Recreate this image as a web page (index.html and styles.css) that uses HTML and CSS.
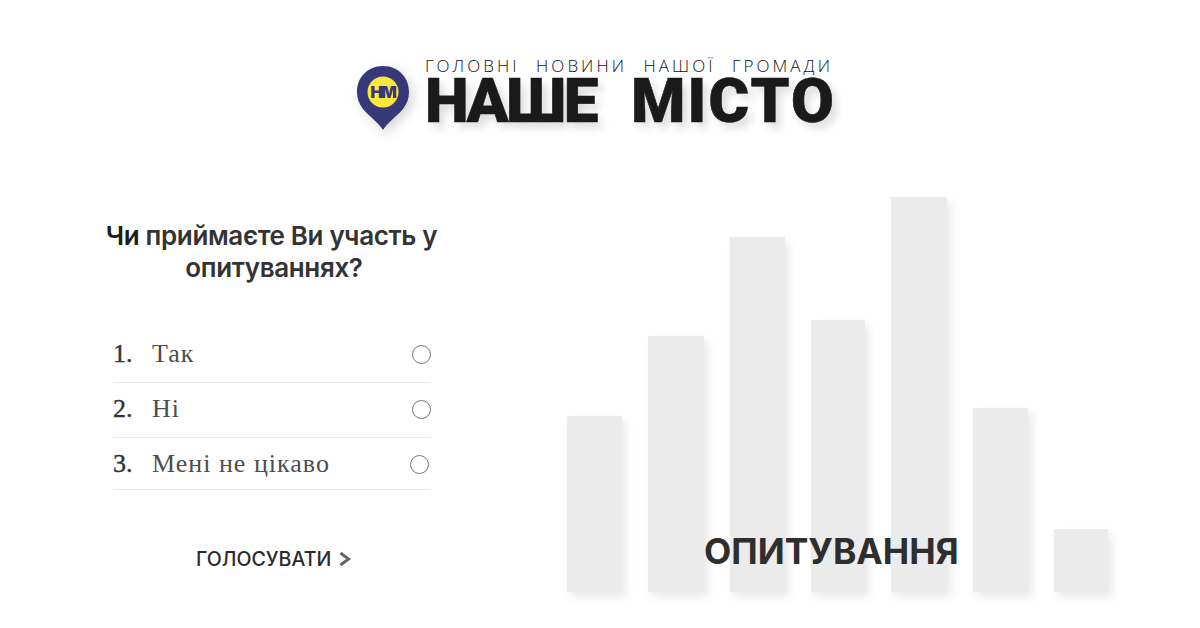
FILE: index.html
```html
<!DOCTYPE html>
<html lang="uk">
<head>
    <meta charset="UTF-8">
    <meta name="viewport" content="width=device-width, initial-scale=1.0">
    <title>Наше Місто - Опитування</title>
    <link rel="stylesheet" href="styles.css">
</head>
<body>
    <header class="logo">
        <svg class="logo-pin" viewBox="0 0 54 66" width="54" height="66">
            <path d="M27 65 C23 58 14 52 7 44 C3 39 1 33 1 27 C1 12 12 1 27 1 C42 1 53 12 53 27 C53 33 51 39 47 44 C40 52 31 58 27 65 Z" fill="#37387a"/>
            <circle cx="27" cy="27" r="15.5" fill="#f6e83c"/>
            <text x="27" y="33" text-anchor="middle" class="logo-pin-text">НМ</text>
        </svg>
        <div class="logo-text">
            <div class="logo-tagline">ГОЛОВНІ НОВИНИ НАШОЇ ГРОМАДИ</div>
            <div class="logo-title">
                <span class="logo-word-first">НАШЕ</span>
                <span class="logo-word-second">МІСТО</span>
            </div>
        </div>
    </header>

    <main class="content">
        <section class="poll">
            <h1 class="poll-question"><span class="poll-question-dark">Чи</span> приймаєте Ви участь у<br><span class="poll-question-line">опитуваннях?</span></h1>
            <ol class="poll-options">
                <li class="poll-option">
                    <span class="poll-num">1.</span>
                    <span class="poll-label">Так</span>
                    <span class="poll-radio"></span>
                </li>
                <li class="poll-option">
                    <span class="poll-num">2.</span>
                    <span class="poll-label">Ні</span>
                    <span class="poll-radio"></span>
                </li>
                <li class="poll-option poll-option-last">
                    <span class="poll-num">3.</span>
                    <span class="poll-label">Мені не цікаво</span>
                    <span class="poll-radio"></span>
                </li>
            </ol>
            <div class="poll-vote">
                <span>ГОЛОСУВАТИ</span>
                <svg viewBox="0 0 12 16" width="12" height="16">
                    <path d="M1.5 2 L9.5 8 L1.5 14" fill="none" stroke="#666" stroke-width="3"/>
                </svg>
            </div>
        </section>

        <section class="chart">
            <div class="bar" style="width: 55px; height: 176px"></div>
            <div class="bar" style="width: 56px; height: 256px"></div>
            <div class="bar" style="width: 55px; height: 355px"></div>
            <div class="bar" style="width: 54px; height: 272px"></div>
            <div class="bar" style="width: 56px; height: 395px"></div>
            <div class="bar" style="width: 55px; height: 184px"></div>
            <div class="bar" style="width: 54px; height: 63px"></div>
            <div class="chart-title">ОПИТУВАННЯ</div>
        </section>
    </main>
</body>
</html>
```

FILE: styles.css
```css
* {
    box-sizing: border-box;
}
html, body {
    margin: 0;
    height: 100%;
}
body {
    width: 1200px;
    height: 628px;
    overflow: hidden;
    background-color: #fff;
    font-family: Inter, "Liberation Sans", sans-serif;
    color: #2b2b2b;
}

/* Logo */
.logo {
    height: 130px;
    padding: 56px 0 0 356px;
    display: flex;
    align-items: flex-start;
}
.logo-pin {
    margin-top: 9px;
    filter: drop-shadow(4px 4px 6px rgba(0, 0, 0, 0.16));
}
.logo-pin-text {
    font-family: Inter, sans-serif;
    font-size: 16.5px;
    font-weight: 900;
    letter-spacing: -1.5px;
    fill: #37387a;
}
.logo-text {
    margin-left: 15px;
    width: 410px;
}
.logo-tagline {
    font-family: "Open Sans", sans-serif;
    font-size: 17px;
    font-weight: 300;
    line-height: 20px;
    letter-spacing: 3.05px;
    word-spacing: 9px;
    white-space: nowrap;
    color: #111;
}
.logo-title {
    display: flex;
    gap: 35px;
    font-family: Roboto, sans-serif;
    font-size: 62px;
    font-weight: 900;
    line-height: 50px;
    white-space: nowrap;
    color: #1a1a1a;
    -webkit-text-stroke: 0.6px #1a1a1a;
    text-shadow: 5px 6px 9px rgba(0, 0, 0, 0.14);
}
.logo-word-first {
    letter-spacing: -2.5px;
}
.logo-word-second {
    letter-spacing: 2.2px;
}

/* Poll */
.content {
    display: flex;
    align-items: flex-start;
}
.poll {
    width: 333px;
    margin: 90px 0 0 105px;
}
.poll-question {
    margin: 0 -4px;
    font-size: 26px;
    font-weight: 600;
    line-height: 32px;
    text-align: center;
    letter-spacing: -0.35px;
    color: #333;
}
.poll-question-dark {
    color: #1c1c1c;
}
.poll-question-line {
    padding-left: 5px;
}
.poll-options {
    list-style: none;
    margin: 44px 0 0 8px;
    padding: 0;
    width: 318px;
}
.poll-option {
    height: 55px;
    padding-bottom: 2px;
    display: flex;
    align-items: center;
    border-bottom: 1px solid #e8e8e8;
    font-family: "Liberation Serif", serif;
    font-size: 26px;
}
.poll-option-last {
    height: 52px;
    padding-top: 3px;
}
.poll-option-last .poll-radio {
    margin-right: 2px;
}
.poll-num {
    width: 39px;
    color: #333;
    -webkit-text-stroke: 0.4px #333;
}
.poll-label {
    flex: 1;
    color: #4d4d4d;
    letter-spacing: 1px;
}
.poll-radio {
    width: 19px;
    height: 19px;
    border: 1.5px solid #777;
    border-radius: 50%;
}
.poll-vote {
    margin: 57px 0 0 91px;
    display: flex;
    align-items: center;
    gap: 8px;
    font-size: 19.6px;
    font-weight: 500;
    color: #2b2b2b;
}

/* Chart */
.chart {
    position: relative;
    height: 395px;
    margin: 67px 0 0 129px;
    display: flex;
    align-items: flex-end;
    gap: 26px;
}
.bar {
    background-color: #ebebeb;
    box-shadow: 4px 5px 9px rgba(0, 0, 0, 0.09);
    filter: blur(0.5px);
}
.chart-title {
    position: absolute;
    left: 137px;
    top: 333px;
    font-size: 35.4px;
    font-weight: 700;
    line-height: 44px;
    color: #2e2e2e;
}
```
